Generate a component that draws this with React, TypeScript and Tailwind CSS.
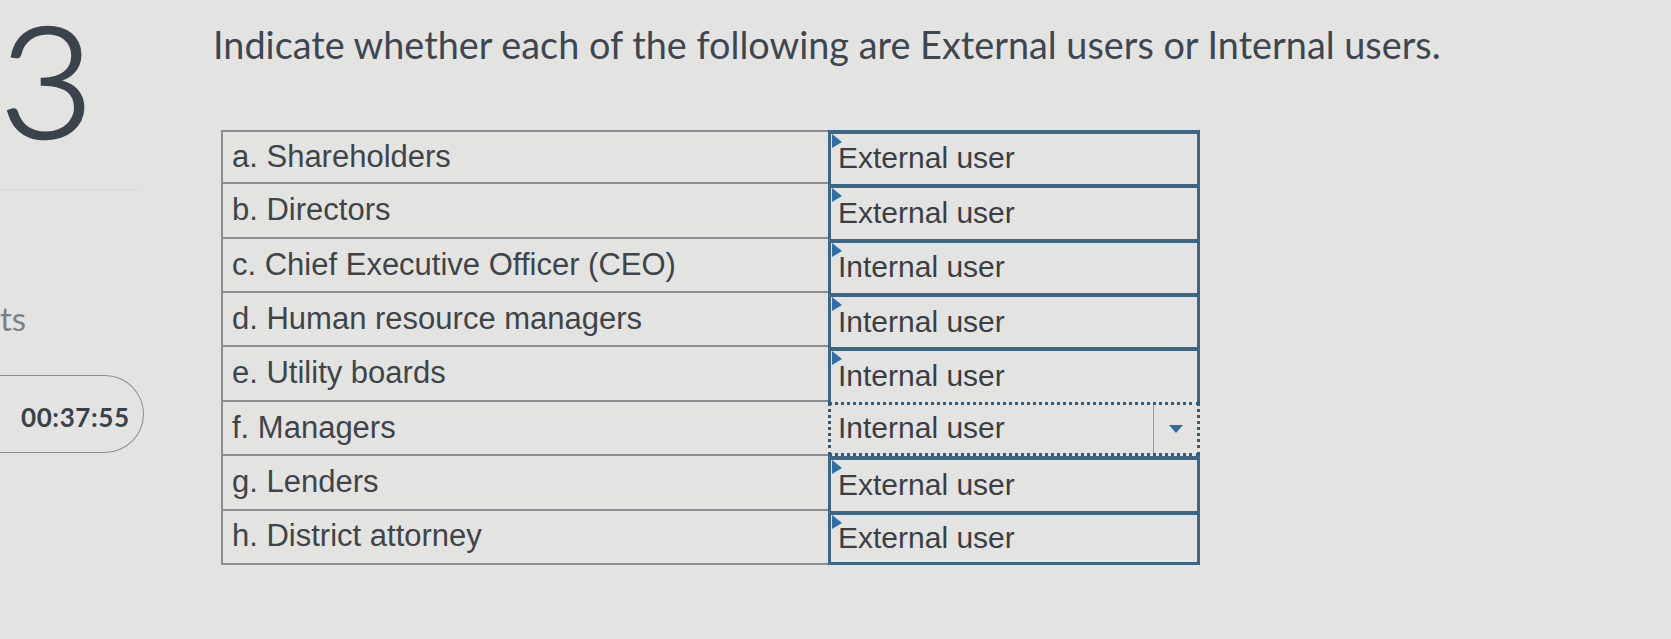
type Row = { label: string; answer: string; open?: boolean };

const ROWS: Row[] = [
  { label: 'a. Shareholders', answer: 'External user' },
  { label: 'b. Directors', answer: 'External user' },
  { label: 'c. Chief Executive Officer (CEO)', answer: 'Internal user' },
  { label: 'd. Human resource managers', answer: 'Internal user' },
  { label: 'e. Utility boards', answer: 'Internal user' },
  { label: 'f. Managers', answer: 'Internal user', open: true },
  { label: 'g. Lenders', answer: 'External user' },
  { label: 'h. District attorney', answer: 'External user' },
];

function Flag() {
  return (
    <svg className="absolute left-[1px] top-0" width="10" height="14" viewBox="0 0 10 14">
      <polygon points="0,0 10,8 0,14" fill="#2f6ea6" />
    </svg>
  );
}

function AnswerCell({ row, last }: { row: Row; last: boolean }) {
  if (row.open) {
    return (
      <div className="flex h-full items-center border-[3px] border-dotted border-[#2f5c7d]">
        <span className="flex-1 pl-[7px] pb-[2px]">{row.answer}</span>
        <div className="flex h-full w-[44px] items-center justify-center border-l border-[#9a9d9f]">
          <svg width="14" height="8" viewBox="0 0 14 8">
            <polygon points="0,0 14,0 7,8" fill="#2f6a9e" />
          </svg>
        </div>
      </div>
    );
  }
  return (
    <div
      className={`relative flex h-full items-center border-x-[3px] border-t-4 border-[#3b6685] pl-[7px] pb-[2px] ${
        last ? 'border-b-[3px]' : ''
      }`}
    >
      <Flag />
      {row.answer}
    </div>
  );
}

export default function App() {
  return (
    <div className="flex h-[639px] w-[1671px] overflow-hidden bg-[#e3e4e2] font-['Lato',sans-serif]">
      {/* left rail */}
      <div className="flex w-[213px] shrink-0 flex-col">
        <div className="h-[190px] w-[140px] border-b border-[#dadbd9] pt-px pl-[4px]">
          <div className="inline-block origin-right scale-x-[1.05] text-[155px] leading-none font-light text-[#3b444c] [-webkit-text-stroke:2.5px_#3b444c]">
            3
          </div>
        </div>
        <div className="mt-[112px] text-[33px] leading-none text-[#7b8085]">ts</div>
        <div className="mt-[40px] flex h-[78px] w-[144px] items-center rounded-r-[40px] border-[1.5px] border-l-0 border-[#8a8e90] pl-[21px] pt-[6px]">
          <span className="text-[26px] font-bold tracking-[0.6px] text-[#3a4249]">00:37:55</span>
        </div>
      </div>

      {/* question */}
      <div className="flex flex-col">
        <h1 className="pt-[26px] text-[37.8px] leading-none text-[#3d4651]">
          Indicate whether each of the following are External users or Internal users.
        </h1>

        <div className="mt-[66px] ml-[8px] w-[979px] font-['Liberation_Sans',Arial,sans-serif] text-[31px] text-[#3f4448]">
          {ROWS.map((r, i) => (
            <div key={r.label} className="flex h-[54.4px]">
              <div
                className={`flex w-[607px] items-center border-l-2 border-b-2 border-[#8a8d8f] pl-[9px] ${
                  i === 0 ? 'border-t-2' : ''
                }`}
              >
                {r.label}
              </div>
              <div className="w-[372px] text-[30px] text-[#3b3f43]">
                <AnswerCell row={r} last={i === ROWS.length - 1} />
              </div>
            </div>
          ))}
        </div>
      </div>
    </div>
  );
}
